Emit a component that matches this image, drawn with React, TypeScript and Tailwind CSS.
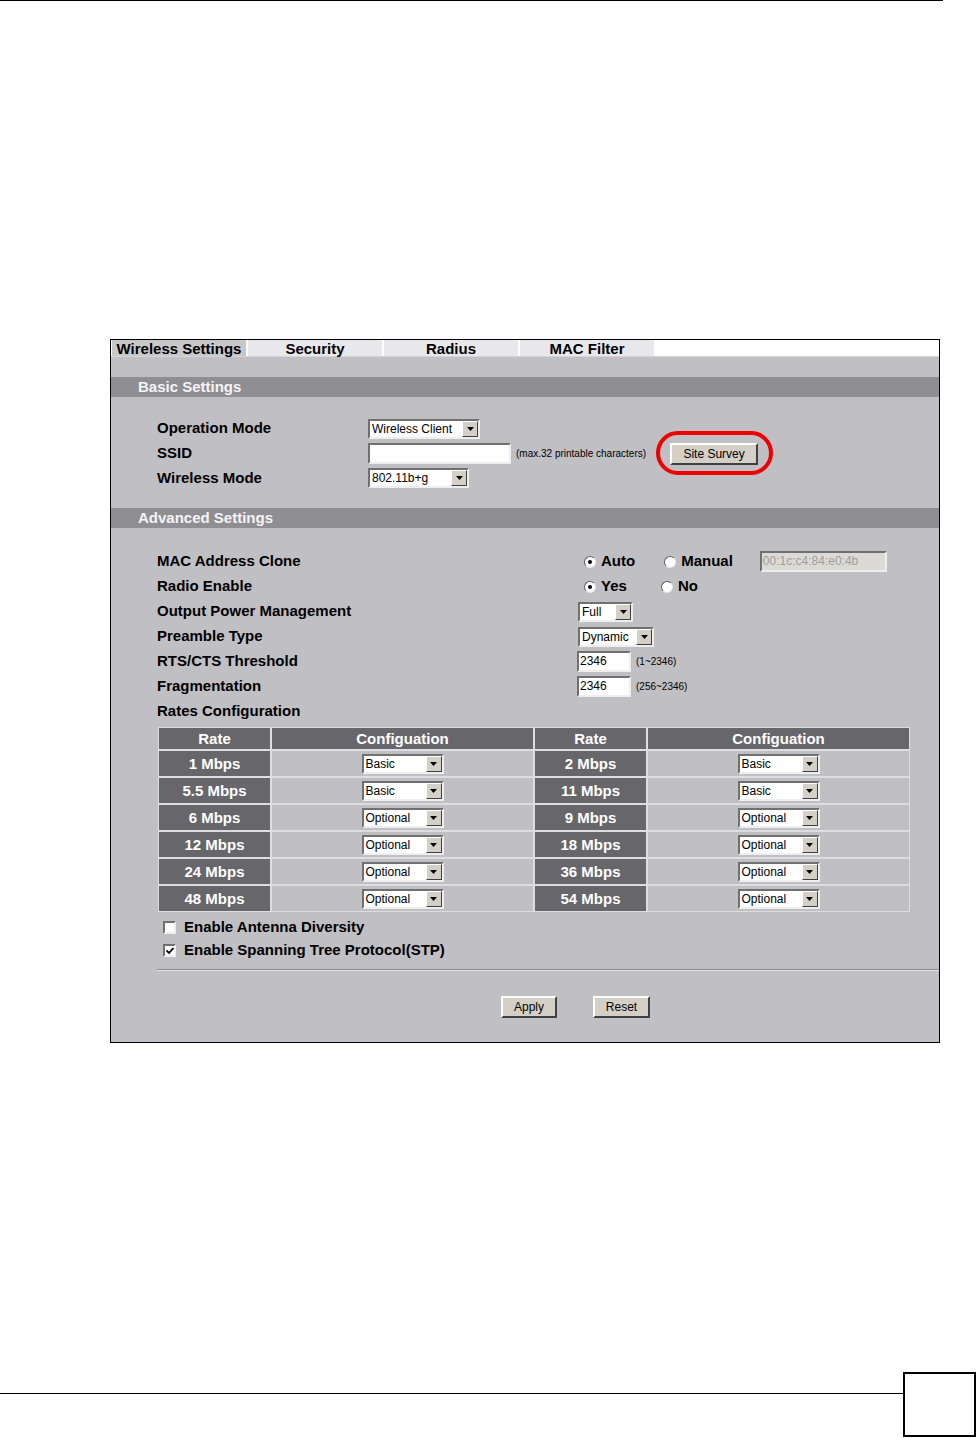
import React from 'react'

const font = { fontFamily: '"Liberation Sans", Arial, sans-serif' }

function Select({ value, className }: { value: string; className: string }) {
  return (
    <div
      className={`flex h-[20px] bg-white border-2 border-t-[#707070] border-l-[#707070] border-b-[#eeeeee] border-r-[#eeeeee] font-normal ${className}`}
    >
      <span className="flex-1 truncate pl-[2px] text-[12px] leading-[16px] text-black">{value}</span>
      <span className="flex w-[16px] h-full items-center justify-center bg-[#d4d0c8] border border-t-white border-l-white border-b-[#404040] border-r-[#404040]">
        <svg width="7" height="4" viewBox="0 0 7 4">
          <polygon points="0,0 7,0 3.5,4" fill="#000" />
        </svg>
      </span>
    </div>
  )
}

function TextInput({ value, className, disabled }: { value?: string; className: string; disabled?: boolean }) {
  return (
    <div
      className={`h-[21px] border-2 border-t-[#707070] border-l-[#707070] border-b-[#eeeeee] border-r-[#eeeeee] pl-[1px] text-[12px] font-normal leading-[17px] ${
        disabled ? 'bg-[#dcdad6] text-[#a09e9a]' : 'bg-white text-black'
      } ${className}`}
    >
      {value}
    </div>
  )
}

function Button({ label, className }: { label: string; className: string }) {
  return (
    <div
      className={`flex h-[22px] items-center justify-center bg-[#d4d0c8] border-2 border-t-white border-l-white border-b-[#404040] border-r-[#404040] text-[12px] font-normal text-black ${className}`}
    >
      {label}
    </div>
  )
}

function Radio({ label, checked, className }: { label: string; checked?: boolean; className?: string }) {
  return (
    <div className={`flex items-center ${className ?? ''}`}>
      <span className="flex h-[12px] w-[12px] items-center justify-center rounded-full bg-white border border-t-[#606060] border-l-[#606060] border-b-[#e8e8e8] border-r-[#e8e8e8]">
        {checked && <span className="h-[4px] w-[4px] rounded-full bg-black" />}
      </span>
      <span className="ml-[5px] text-[15px] font-bold text-black">{label}</span>
    </div>
  )
}

function Checkbox({ label, checked }: { label: string; checked?: boolean }) {
  return (
    <div className="flex h-[23px] items-center pl-[52px]">
      <span className="flex h-[13px] w-[13px] items-center justify-center bg-white border-2 border-t-[#707070] border-l-[#707070] border-b-[#eeeeee] border-r-[#eeeeee]">
        {checked && (
          <svg width="8" height="8" viewBox="0 0 8 8">
            <path d="M0.5 3.5 L3 6 L7.5 1" stroke="#000" strokeWidth="1.8" fill="none" />
          </svg>
        )}
      </span>
      <span className="ml-[8px] text-[15px] font-bold text-black">{label}</span>
    </div>
  )
}

const leftRates = [
  ['1 Mbps', 'Basic'],
  ['5.5 Mbps', 'Basic'],
  ['6 Mbps', 'Optional'],
  ['12 Mbps', 'Optional'],
  ['24 Mbps', 'Optional'],
  ['48 Mbps', 'Optional'],
]
const rightRates = [
  ['2 Mbps', 'Basic'],
  ['11 Mbps', 'Basic'],
  ['9 Mbps', 'Optional'],
  ['18 Mbps', 'Optional'],
  ['36 Mbps', 'Optional'],
  ['54 Mbps', 'Optional'],
]

function SectionHeader({ title }: { title: string }) {
  return (
    <div className="h-[20px] bg-[#8f8e93] pl-[27px] text-[15px] font-bold leading-[20px] text-[#f4f4f4]">
      {title}
    </div>
  )
}

export default function App() {
  const tabs = ['Wireless Settings', 'Security', 'Radius', 'MAC Filter']

  return (
    <div className="flex h-[1438px] w-[977px] flex-col bg-white" style={font}>
      <div className="h-px w-[943px] bg-black" />

      {/* settings panel */}
      <div className="ml-[110px] mt-[338px] w-[830px] border border-black bg-[#c0bfc4]">
        {/* tabs */}
        <div className="flex h-[17px] gap-[2px] bg-white pl-px border-b border-[#d6d6d8]">
          {tabs.map((t, i) => (
            <div
              key={t}
              className={`w-[134px] text-center text-[15px] font-bold leading-[17px] text-black ${
                i === 0 ? 'bg-[#c8c8ca]' : 'bg-[#e8e8ec]'
              }`}
            >
              {t}
            </div>
          ))}
        </div>
        <div className="h-[20px]" />

        <SectionHeader title="Basic Settings" />
        <div className="pb-[18px] pl-[46px] pt-[19px] text-[15px] font-bold text-black">
          <div className="flex h-[25px] items-center">
            <span className="w-[211px]">Operation Mode</span>
            <Select value="Wireless Client" className="w-[112px]" />
          </div>
          <div className="flex h-[25px] items-center">
            <span className="w-[211px]">SSID</span>
            <TextInput className="w-[143px]" />
            <span className="ml-[5px] text-[10px] font-normal">(max.32 printable characters)</span>
            <div className="relative ml-[24px]">
              <Button label="Site Survey" className="w-[88px]" />
              <div className="pointer-events-none absolute -bottom-[10px] -left-[14px] -right-[15px] -top-[12px] rounded-[22px] border-[4px] border-[#ee0000]" />
            </div>
          </div>
          <div className="flex h-[24px] items-center">
            <span className="w-[211px]">Wireless Mode</span>
            <Select value="802.11b+g" className="w-[101px]" />
          </div>
        </div>

        <SectionHeader title="Advanced Settings" />
        <div className="pl-[46px] pt-[21px] text-[15px] font-bold text-black">
          <div className="flex h-[25px] items-center">
            <span className="w-[421px]">MAC Address Clone</span>
            <Radio label="Auto" checked className="ml-[6px]" />
            <Radio label="Manual" className="ml-[29px]" />
            <TextInput value="00:1c:c4:84:e0:4b" disabled className="ml-[27px] w-[127px]" />
          </div>
          <div className="flex h-[25px] items-center">
            <span className="w-[421px]">Radio Enable</span>
            <Radio label="Yes" checked className="ml-[6px]" />
            <Radio label="No" className="ml-[34px]" />
          </div>
          <div className="flex h-[25px] items-center">
            <span className="w-[421px]">Output Power Management</span>
            <Select value="Full" className="w-[55px]" />
          </div>
          <div className="flex h-[25px] items-center">
            <span className="w-[421px]">Preamble Type</span>
            <Select value="Dynamic" className="w-[76px]" />
          </div>
          <div className="flex h-[25px] items-center">
            <span className="w-[420px]">RTS/CTS Threshold</span>
            <TextInput value="2346" className="w-[54px]" />
            <span className="ml-[5px] text-[10px] font-normal">(1~2346)</span>
          </div>
          <div className="flex h-[25px] items-center">
            <span className="w-[420px]">Fragmentation</span>
            <TextInput value="2346" className="w-[54px]" />
            <span className="ml-[5px] text-[10px] font-normal">(256~2346)</span>
          </div>
          <div className="flex h-[25px] items-center">
            <span>Rates Configuration</span>
          </div>
        </div>

        {/* rates table */}
        <div className="mt-[3px] ml-[47px] w-[752px] bg-[#dddce0] p-px">
          <div className="grid grid-cols-[111px_261px_111px_261px] gap-[2px] text-[15px] font-bold">
            {['Rate', 'Configuation', 'Rate', 'Configuation'].map((h, i) => (
              <div key={i} className="h-[21px] bg-[#67666b] text-center leading-[21px] text-white">
                {h}
              </div>
            ))}
            {leftRates.map((l, i) => {
              const r = rightRates[i]
              return (
                <React.Fragment key={i}>
                  <div className="h-[25px] bg-[#67666b] text-center leading-[25px] text-white">{l[0]}</div>
                  <div className="flex h-[25px] items-center justify-center bg-[#c0bfc4]">
                    <Select value={l[1]} className="w-[82px]" />
                  </div>
                  <div className="h-[25px] bg-[#67666b] text-center leading-[25px] text-white">{r[0]}</div>
                  <div className="flex h-[25px] items-center justify-center bg-[#c0bfc4]">
                    <Select value={r[1]} className="w-[82px]" />
                  </div>
                </React.Fragment>
              )
            })}
          </div>
        </div>

        <div className="pt-[4px]">
          <Checkbox label="Enable Antenna Diversity" />
          <Checkbox label="Enable Spanning Tree Protocol(STP)" checked />
        </div>

        <div className="ml-[46px] mt-[7px] border-t border-[#8a898e] border-b border-b-[#e4e3e7]" />

        <div className="flex gap-[36px] pb-[24px] pl-[390px] pt-[25px]">
          <Button label="Apply" className="w-[56px]" />
          <Button label="Reset" className="w-[57px]" />
        </div>
      </div>

      {/* page footer */}
      <div className="mb-px mt-auto flex items-start">
        <div className="mt-[21px] h-px w-[903px] bg-black" />
        <div className="h-[65px] w-[73px] border-2 border-black" />
      </div>
    </div>
  )
}
